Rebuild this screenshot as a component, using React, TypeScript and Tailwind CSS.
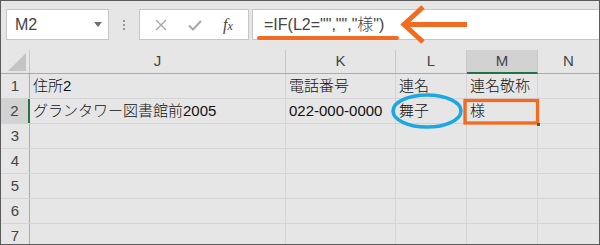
import React from "react";

const font = { fontFamily: '"Liberation Sans", "Noto Sans CJK JP", sans-serif' };

const cols = [
  { key: "J", w: "w-[256px]" },
  { key: "K", w: "w-[110px]" },
  { key: "L", w: "w-[71px]" },
  { key: "M", w: "w-[71px]" },
  { key: "N", w: "flex-1" },
];

const rows: Record<number, string[]> = {
  1: ["住所2", "電話番号", "連名", "連名敬称", ""],
  2: ["グランタワー図書館前2005", "022-000-0000", "舞子", "様", ""],
};

export default function App() {
  return (
    <div
      className="relative w-[600px] h-[245px] overflow-hidden border border-[#5b5b5b] bg-[#e6e6e6] text-[15px]"
      style={font}
    >
      {/* Toolbar: name box + formula bar */}
      <div className="flex items-center h-[49px] pl-[5px] pb-[2px]">
        <div className="flex items-center justify-between w-[103px] h-[31px] bg-white border border-[#c6c6c6] pl-[8px] pr-[6px]">
          <span className="text-[#444] text-[16px]">M2</span>
          <span className="w-0 h-0 border-l-[4px] border-r-[4px] border-t-[5px] border-l-transparent border-r-transparent border-t-[#707070]" />
        </div>
        <div className="flex flex-col gap-[2px] w-[30px] items-center">
          <span className="w-[2px] h-[2px] bg-[#9a9a9a]" />
          <span className="w-[2px] h-[2px] bg-[#9a9a9a]" />
          <span className="w-[2px] h-[2px] bg-[#9a9a9a]" />
        </div>
        <div className="flex items-center w-[110px] h-[31px] bg-white border border-[#c6c6c6]">
          <svg width="14" height="14" viewBox="0 0 14 14" className="ml-[14px]">
            <path d="M2 2 L12 12 M12 2 L2 12" stroke="#a8a8a8" strokeWidth="1.4" />
          </svg>
          <svg width="16" height="14" viewBox="0 0 16 14" className="ml-[19px]">
            <path d="M2 7.5 L6 11.5 L14 3" stroke="#a8a8a8" strokeWidth="2" fill="none" />
          </svg>
          <span
            className="ml-[20px] italic text-[#444] text-[16px]"
            style={{ fontFamily: '"Liberation Serif", serif' }}
          >
            f<span className="text-[12px]">x</span>
          </span>
        </div>
        <div className="flex items-center flex-1 h-[31px] ml-[3px] bg-white border-y border-l border-[#c6c6c6] pl-[11px]">
          <span className="text-[#444] text-[16px] font-light">=IF(L2="","","様")</span>
        </div>
      </div>

      {/* Column headers */}
      <div className="flex h-[24px] border-b border-[#ababab]">
        <div className="relative w-[29px] border-r border-[#c8c8c8]">
          <svg width="18" height="18" viewBox="0 0 18 18" className="absolute right-[3px] bottom-[2px]">
            <path d="M18 0 L18 18 L0 18 Z" fill="#c4c4c4" />
          </svg>
        </div>
        {cols.map((c) => (
          <div
            key={c.key}
            className={`${c.w} flex items-center justify-center text-[#444] ${
              c.key === "M"
                ? "bg-[#d2d2d2] border-b-2 border-[#217346] -mb-px border-r border-r-[#c8c8c8]"
                : c.key === "N"
                ? ""
                : "border-r border-[#c8c8c8]"
            }`}
          >
            {c.key}
          </div>
        ))}
      </div>

      {/* Rows */}
      {[1, 2, 3, 4, 5, 6, 7].map((r) => (
        <div key={r} className="flex h-[25px] border-b border-[#d4d4d4]">
          <div
            className={`w-[29px] flex items-center justify-center text-[#444] ${
              r === 2
                ? "bg-[#d2d2d2] border-r-2 border-[#217346]"
                : "border-r border-[#ababab]"
            }`}
          >
            {r}
          </div>
          {cols.map((c, i) => (
            <div
              key={c.key}
              className={`${c.w} flex items-center pl-[3px] text-[#111] font-light whitespace-nowrap overflow-hidden ${
                c.key === "N" ? "" : "border-r border-[#d4d4d4]"
              }`}
            >
              {rows[r]?.[i] ?? ""}
            </div>
          ))}
        </div>
      ))}

      {/* Annotations */}
      <svg
        width="600"
        height="245"
        viewBox="0 0 600 245"
        className="absolute left-[-1px] top-[-1px] pointer-events-none"
      >
        <line x1="259" y1="38" x2="397" y2="38" stroke="#f26b21" strokeWidth="4" strokeLinecap="round" />
        <polyline points="423,7 404,24.5 423,42" stroke="#f26b21" strokeWidth="5" fill="none" />
        <line x1="407" y1="24.5" x2="467" y2="24.5" stroke="#f26b21" strokeWidth="5" />
        <ellipse cx="427" cy="111" rx="34" ry="16" stroke="#1ba7e1" strokeWidth="3.5" fill="none" />
        <rect x="465" y="100.5" width="72.5" height="22.5" stroke="#f26b21" strokeWidth="3.3" fill="none" />
        <rect x="537" y="123" width="3" height="3" fill="#217346" />
      </svg>
    </div>
  );
}
